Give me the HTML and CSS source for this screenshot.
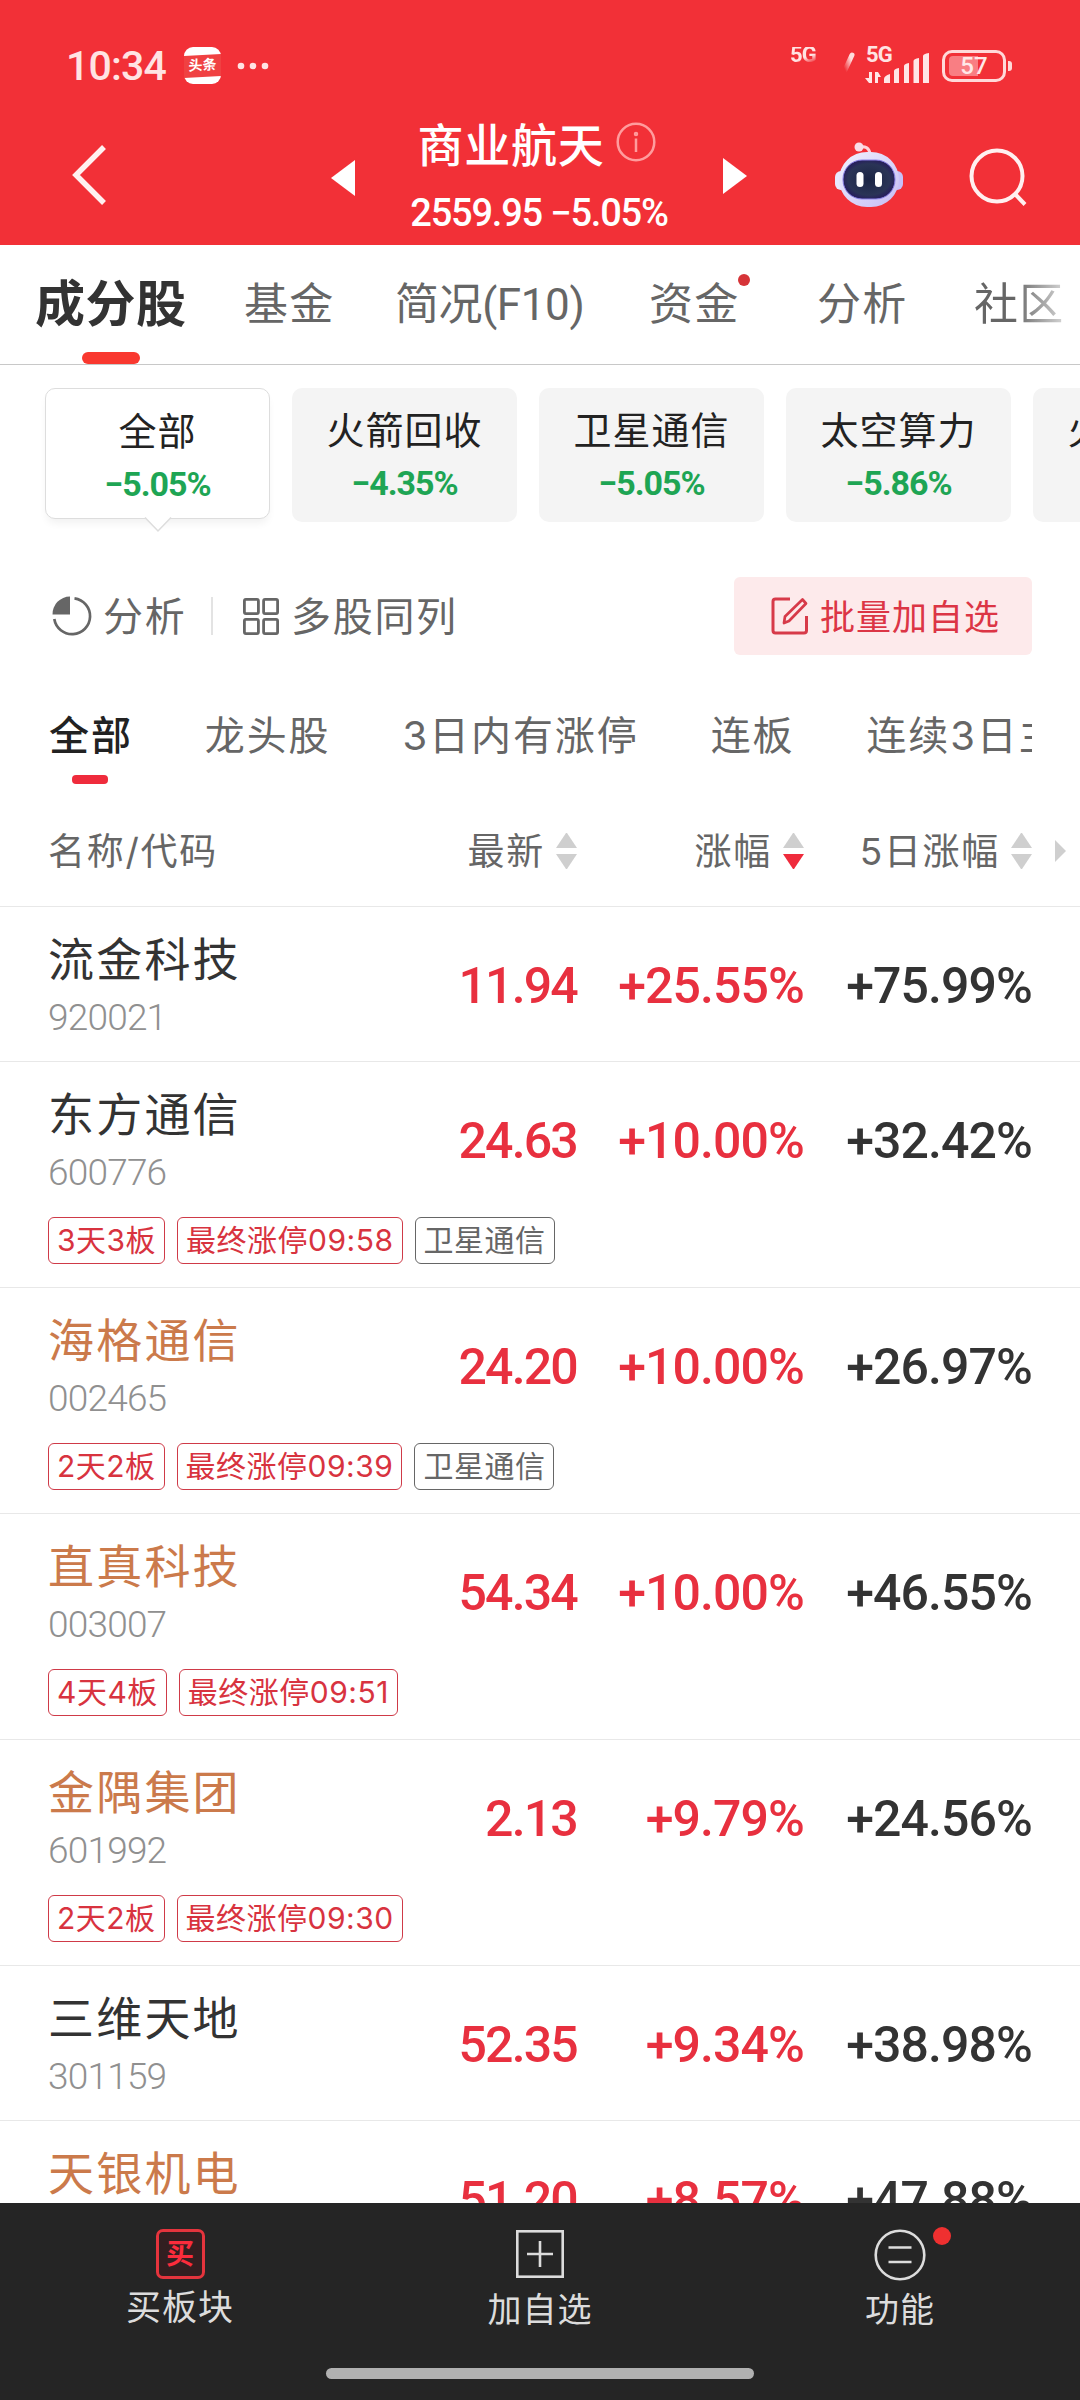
FILE: index.html
```html
<!DOCTYPE html>
<html lang="zh-CN">
<head>
    <meta charset="UTF-8">
    <meta name="viewport" content="width=device-width, initial-scale=1.0">
    <title>商业航天</title>
    <link rel="stylesheet" href="styles.css">
</head>
<body>
    <header class="header">
        <div class="status-bar">
            <span class="time">10:34</span>
            <span class="app-badge"><b>头条</b></span>
            <svg class="dots" width="32" height="8" viewBox="0 0 32 8" fill="#ffe3e3">
                <circle cx="4" cy="4" r="3.3"/><circle cx="16" cy="4" r="3.3"/><circle cx="28" cy="4" r="3.3"/>
            </svg>
            <div class="status-right">
                <div class="sim sim-1">
                    <span class="net net-faded">5G</span>
                    <svg width="14" height="22" viewBox="0 0 14 22">
                        <defs>
                            <linearGradient id="slash" x1="1" y1="0" x2="0" y2="1">
                                <stop offset="0.2" stop-color="#ffdcdc"/>
                                <stop offset="1" stop-color="#ffdcdc" stop-opacity="0"/>
                            </linearGradient>
                        </defs>
                        <path d="M11 3 L4 18" stroke="url(#slash)" stroke-width="5" stroke-linecap="round"/>
                    </svg>
                </div>
                <div class="sim sim-2">
                    <span class="net">5G</span>
                    <svg class="bars" width="64" height="31" viewBox="0 0 64 31" fill="#ffe6e6">
                        <path d="M3 20h3v11h-3l-4-5h4zM9 31v-11h3l3 5h-3v6z"/>
                        <path d="M18 31v-4q0-3 6-5v9z"/>
                        <path d="M28 31v-12q0-2 5-3v15z"/>
                        <path d="M38 31v-17q0-2 5-3v20z"/>
                        <path d="M47.5 31v-22q0-2 5.5-3v25z"/>
                        <path d="M57 31v-27q0-2 6-3v30z"/>
                    </svg>
                </div>
                <span class="battery"><i></i><em>57</em></span>
            </div>
        </div>
        <div class="nav-bar">
            <svg class="back" width="36" height="60" viewBox="0 0 36 60" fill="none" stroke="#fff1f0" stroke-width="5.5">
                <path d="M33 2 L5 30 L33 58"/>
            </svg>
            <svg class="prev" width="24" height="36" viewBox="0 0 24 36" fill="#fff"><path d="M24 0v36L0 18z"/></svg>
            <div class="title">
                <div class="title-name">商业航天
                    <svg width="40" height="40" viewBox="0 0 40 40" fill="none" stroke="#ff9c9d" stroke-width="2.5">
                        <circle cx="20" cy="20" r="18.3"/>
                        <path d="M20 16.5V30"/>
                        <circle cx="20" cy="12" r="1"/>
                    </svg>
                </div>
                <div class="title-quote">2559.95 −5.05%</div>
            </div>
            <svg class="next" width="24" height="36" viewBox="0 0 24 36" fill="#fff"><path d="M0 0v36l24-18z"/></svg>
            <svg class="robot" width="70" height="66" viewBox="0 0 70 66">
                <defs>
                    <linearGradient id="shell" x1="0" y1="0" x2="1" y2="1">
                        <stop offset="0" stop-color="#f2f2ff"/>
                        <stop offset="1" stop-color="#c5bcf3"/>
                    </linearGradient>
                    <radialGradient id="visor">
                        <stop offset="0" stop-color="#1b2444"/>
                        <stop offset="0.8" stop-color="#2a3456"/>
                        <stop offset="1" stop-color="#27215c"/>
                    </radialGradient>
                </defs>
                <path d="M25 5q10-2 11 7" fill="none" stroke="#ffd3dc" stroke-width="3"/>
                <circle cx="25" cy="5" r="4.5" fill="#f9dce8"/>
                <rect x="1" y="29" width="12" height="19" rx="6" fill="#e8e8ff"/>
                <rect x="57" y="29" width="12" height="19" rx="6" fill="#c7c0f8"/>
                <rect x="5" y="10" width="60" height="55" rx="28" fill="url(#shell)"/>
                <rect x="9" y="18" width="52" height="39" rx="19" fill="url(#visor)" stroke="#8c83e8" stroke-width="1"/>
                <rect x="22.5" y="30" width="7" height="15" rx="3.5" fill="#fff"/>
                <rect x="41" y="30" width="7" height="15" rx="3.5" fill="#fff"/>
            </svg>
            <svg class="search" width="58" height="58" viewBox="0 0 58 58" fill="none" stroke="#fff0f0" stroke-width="4">
                <circle cx="28" cy="28" r="25.5"/>
                <path d="M46 46l10 10.5"/>
            </svg>
        </div>
    </header>

    <nav class="tabs">
        <span class="tab active">成分股</span>
        <span class="tab">基金</span>
        <span class="tab tab-f10">简况(F10)</span>
        <span class="tab has-dot">资金</span>
        <span class="tab">分析</span>
        <span class="tab">社区</span>
    </nav>

    <main>
        <div class="chips">
            <div class="chip selected">
                <span>全部</span><b>−5.05%</b>
                <svg class="caret" width="28" height="16" viewBox="0 0 28 16"><path d="M1 0.5 L14 14 L27 0.5" fill="#fff" stroke="#ddd" stroke-width="1.5"/></svg>
            </div>
            <div class="chip"><span>火箭回收</span><b>−4.35%</b></div>
            <div class="chip"><span>卫星通信</span><b>−5.05%</b></div>
            <div class="chip"><span>太空算力</span><b>−5.86%</b></div>
            <div class="chip"><span>火箭制造</span></div>
        </div>

        <div class="tools">
            <svg width="40" height="40" viewBox="0 0 40 40" fill="none" stroke="#666" stroke-width="2.7">
                <path d="M22.5 2.3A18 18 0 1 1 2.3 23"/>
                <path d="M18 0.5V18.5H0.5A17.5 17.5 0 0 1 18 0.5z" fill="#666" stroke="none"/>
            </svg>
            <span class="tool-analyse">分析</span>
            <i class="divider"></i>
            <svg width="36" height="37" viewBox="0 0 36 37" fill="none" stroke="#666" stroke-width="2.8">
                <rect x="1.4" y="1.4" width="14" height="14.2" rx="1.5"/>
                <rect x="20.6" y="1.4" width="14" height="14.2" rx="1.5"/>
                <rect x="1.4" y="21.4" width="14" height="14.2" rx="1.5"/>
                <rect x="20.6" y="21.4" width="14" height="14.2" rx="1.5"/>
            </svg>
            <span class="tool-multi">多股同列</span>
            <div class="batch-btn">
                <svg width="38" height="38" viewBox="0 0 38 38" fill="none" stroke="#d73a49" stroke-width="3" stroke-linejoin="round">
                    <path d="M19 2H4.5Q2 2 2 4.5V33.5Q2 36 4.500 36H33Q35.5 36 35.5 33.5V19"/>
                    <path d="M13 26l1-6.5L31.5 2.5L35 6.5L18 24z" stroke-width="2.7"/>
                </svg>
                <span>批量加自选</span>
            </div>
        </div>

        <div class="filters">
            <span class="active">全部</span>
            <span>龙头股</span>
            <span>3日内有涨停</span>
            <span>连板</span>
            <span>连续3日主力</span>
        </div>

        <div class="grid-row table-head">
            <span class="label-text">名称/代码</span>
            <span class="col"><span class="label-text">最新</span><i class="sort"></i></span>
            <span class="col"><span class="label-text">涨幅</span><i class="sort desc"></i></span>
            <span class="col"><span class="label-text">5日涨幅</span><i class="sort"></i></span>
            <i class="more"></i>
        </div>

        <div class="stock-list">
            <div class="stock">
                <div class="grid-row">
                    <div><div class="name">流金科技</div><div class="code">920021</div></div>
                    <b class="num price">11.94</b><b class="num up">+25.55%</b><b class="num">+75.99%</b>
                </div>
            </div>
            <div class="stock">
                <div class="grid-row">
                    <div><div class="name">东方通信</div><div class="code">600776</div></div>
                    <b class="num price">24.63</b><b class="num up">+10.00%</b><b class="num">+32.42%</b>
                </div>
                <div class="tags"><span>3天3板</span><span>最终涨停09:58</span><span class="grey">卫星通信</span></div>
            </div>
            <div class="stock">
                <div class="grid-row">
                    <div><div class="name own">海格通信</div><div class="code">002465</div></div>
                    <b class="num price">24.20</b><b class="num up">+10.00%</b><b class="num">+26.97%</b>
                </div>
                <div class="tags"><span>2天2板</span><span>最终涨停09:39</span><span class="grey">卫星通信</span></div>
            </div>
            <div class="stock">
                <div class="grid-row">
                    <div><div class="name own">直真科技</div><div class="code">003007</div></div>
                    <b class="num price">54.34</b><b class="num up">+10.00%</b><b class="num">+46.55%</b>
                </div>
                <div class="tags"><span>4天4板</span><span>最终涨停09:51</span></div>
            </div>
            <div class="stock">
                <div class="grid-row">
                    <div><div class="name own">金隅集团</div><div class="code">601992</div></div>
                    <b class="num price">2.13</b><b class="num up">+9.79%</b><b class="num">+24.56%</b>
                </div>
                <div class="tags"><span>2天2板</span><span>最终涨停09:30</span></div>
            </div>
            <div class="stock">
                <div class="grid-row">
                    <div><div class="name">三维天地</div><div class="code">301159</div></div>
                    <b class="num price">52.35</b><b class="num up">+9.34%</b><b class="num">+38.98%</b>
                </div>
            </div>
            <div class="stock">
                <div class="grid-row">
                    <div><div class="name own">天银机电</div></div>
                    <b class="num price">51.20</b><b class="num up">+8.57%</b><b class="num">+47.88%</b>
                </div>
            </div>
        </div>
    </main>

    <footer class="footer">
        <div class="actions">
            <div class="action">
                <span class="buy-icon">买</span>
                <span class="label">买板块</span>
            </div>
            <div class="action">
                <svg width="50" height="50" viewBox="0 0 50 50" fill="none" stroke="#dcdcdc" stroke-width="2.6">
                    <rect x="2.3" y="2.3" width="45.4" height="45.4"/>
                    <path d="M12 25h26M25 12v26"/>
                </svg>
                <span class="label low">加自选</span>
            </div>
            <div class="action">
                <svg width="52" height="52" viewBox="0 0 52 52" fill="none" stroke="#dcdcdc" stroke-width="2.6">
                    <circle cx="26" cy="26" r="24.3"/>
                    <path d="M14.5 18.5h23M14.5 33h23"/>
                </svg>
                <span class="label low last">功能</span>
                <i class="dot"></i>
            </div>
        </div>
        <div class="home-bar"></div>
    </footer>
</body>
</html>
```
FILE: styles.css
```css
* {
    box-sizing: border-box;
}
body {
    margin: 0;
    width: 1080px;
    height: 2400px;
    overflow: hidden;
    display: flex;
    flex-direction: column;
    background: #fff;
    color: #333;
    font-family: Roboto, "Noto Sans CJK SC", sans-serif;
}
svg {
    display: block;
    flex: none;
    overflow: visible;
}
i, em {
    font-style: normal;
}

/* header */
.header {
    height: 245px;
    flex: none;
    background: #f23037;
    color: #fff;
}
.status-bar {
    height: 110px;
    padding: 21px 67px 0 66px;
    display: flex;
    align-items: center;
}
.time {
    width: 118px;
    font-size: 41px;
    font-weight: 500;
    letter-spacing: -0.8px;
    color: #ffe3e3;
}
.app-badge {
    width: 37px;
    height: 37px;
    padding: 8px 0;
    border-radius: 9px;
    background: #fff;
}
.app-badge b {
    display: block;
    height: 22px;
    line-height: 21px;
    background: #f04142;
    font-size: 14px;
    text-align: center;
    transform: skewY(-3deg);
}
.dots {
    margin-left: 16px;
}
.status-right {
    margin-left: auto;
    display: flex;
    align-items: center;
}
.sim {
    height: 34px;
    display: flex;
}
.sim-1 {
    width: 76px;
    gap: 24px;
}
.sim-1 svg {
    margin-top: 3px;
}
.net {
    width: 27px;
    margin-top: -2px;
    font-size: 22px;
    line-height: 16px;
    font-weight: 700;
    letter-spacing: -0.8px;
    color: #ffe3e3;
}
.net-faded {
    height: 17px;
    -webkit-mask-image: linear-gradient(160deg, #000 60%, transparent 90%);
    mask-image: linear-gradient(160deg, #000 60%, transparent 90%);
}
.sim-2 {
    width: 76px;
}
.bars {
    margin: 3px 0 0 -27px;
}
.battery {
    position: relative;
    width: 64px;
    height: 32px;
    margin-right: 7px;
    border: 3px solid #ffd9d9;
    border-radius: 10px;
}
.battery i {
    display: block;
    width: 29px;
    height: 20px;
    margin: 3px 4px;
    border-radius: 4px 0 0 4px;
    background: #f97e83;
}
.battery em {
    position: absolute;
    inset: 0;
    line-height: 27px;
    font-size: 24px;
    font-weight: 500;
    text-align: center;
    color: #ffe8e8;
}
.battery::after {
    content: "";
    position: absolute;
    right: -9px;
    top: 8px;
    width: 4px;
    height: 10px;
    border-radius: 0 3px 3px 0;
    background: #ffd9d9;
}
.nav-bar {
    height: 130px;
    padding-left: 71px;
    display: flex;
    align-items: center;
}
.prev {
    margin: 5px 0 0 224px;
}
.title {
    width: 258px;
    margin: 0 55px;
    white-space: nowrap;
}
.title-name {
    display: flex;
    align-items: center;
    justify-content: center;
    gap: 12px;
    height: 56px;
    margin-top: -4px;
    padding-right: 4px;
    font-size: 46px;
    letter-spacing: 0.7px;
    font-weight: 500;
}
.title-quote {
    margin-top: 23px;
    line-height: 40px;
    font-size: 38px;
    font-weight: 500;
    letter-spacing: -1.2px;
    text-align: center;
}
.next {
    margin-top: 2px;
}
.robot {
    margin-left: 87px;
}
.search {
    margin: 3px 0 0 65px;
}

/* tabs */
.tabs {
    height: 120px;
    flex: none;
    padding-left: 35px;
    display: flex;
    overflow: hidden;
    border-bottom: 1px solid #c8c8c8;
    white-space: nowrap;
    line-height: 120px;
    font-size: 44px;
    letter-spacing: 1.2px;
    color: #666;
}
.tab {
    width: 88px;
    margin-right: 80px;
    position: relative;
}
.tab.active {
    width: 150px;
    margin-right: 59px;
    font-size: 50px;
    letter-spacing: 0.5px;
    font-weight: 700;
    color: #333;
}
.tab.active::after {
    content: "";
    position: absolute;
    left: 47px;
    bottom: 0;
    width: 58px;
    height: 12px;
    border-radius: 6px;
    background: #f9382f;
}
.tab:nth-child(2) {
    margin-right: 63px;
}
.tab-f10 {
    width: 188px;
    margin-right: 66px;
    letter-spacing: -0.4px;
}
.tab:nth-child(5) {
    margin-right: 69px;
}
.tab:last-child {
    margin-right: 0;
    -webkit-mask-image: linear-gradient(90deg, #000 45%, rgba(0, 0, 0, 0.3));
    mask-image: linear-gradient(90deg, #000 45%, rgba(0, 0, 0, 0.3));
}
.has-dot::after {
    content: "";
    position: absolute;
    left: 89px;
    top: 29px;
    width: 12px;
    height: 12px;
    border-radius: 50%;
    background: #d63438;
}

/* content */
main {
    height: 1838px;
    flex: none;
    overflow: hidden;
}
.chips {
    display: flex;
    gap: 22px;
    padding: 23px 0 0 45px;
}
.chip {
    position: relative;
    flex: none;
    width: 225px;
    height: 134px;
    padding-top: 17px;
    border-radius: 10px;
    background: #f4f4f4;
    text-align: center;
}
.chip span, .chip b {
    display: block;
}
.chip span {
    line-height: 52px;
    font-size: 38px;
    letter-spacing: 1px;
    color: #222;
}
.chip b {
    margin-top: 6px;
    line-height: 40px;
    font-size: 34px;
    font-weight: 700;
    letter-spacing: -1px;
    color: #1ea554;
}
.chip.selected {
    height: 131px;
    background: #fff;
    border: 1.5px solid #ddd;
    box-shadow: 0 6px 8px -2px rgba(0, 0, 0, 0.06);
}
.caret {
    position: absolute;
    left: 98px;
    bottom: -15px;
}
.tools {
    height: 78px;
    margin: 55px 48px 0 52px;
    display: flex;
    align-items: center;
    font-size: 40px;
    letter-spacing: 1.7px;
    color: #666;
}
.tool-analyse {
    width: 119px;
    padding: 0 0 4px 11px;
}
.divider {
    width: 2px;
    height: 38px;
    margin-right: 30px;
    background: #e3e3e3;
}
.tool-multi {
    padding: 0 0 4px 12px;
}
.batch-btn {
    margin-left: auto;
    width: 298px;
    height: 78px;
    padding-left: 37px;
    display: flex;
    align-items: center;
    gap: 11px;
    border-radius: 6px;
    background: #fdeaeb;
    color: #dc3545;
    font-size: 35px;
    letter-spacing: 1px;
}
.batch-btn span {
    padding-bottom: 4px;
}
.filters {
    height: 94px;
    margin: 47px 48px 0 49px;
    display: flex;
    overflow: hidden;
    white-space: nowrap;
    line-height: 68px;
    font-family: Inter, "Noto Sans CJK SC", sans-serif;
    font-size: 40px;
    letter-spacing: 1.9px;
    color: #666;
}
.filters span {
    flex: none;
    margin-right: 72px;
}
.filters .active {
    position: relative;
    color: #222;
    font-weight: 500;
}
.filters .active::after {
    content: "";
    position: absolute;
    left: 23px;
    top: 73px;
    width: 36px;
    height: 9px;
    border-radius: 4px;
    background: #ef2b3c;
}
.grid-row {
    position: relative;
    display: grid;
    grid-template-columns: 1fr 170px 227px 228px;
    padding: 0 48px;
}
.table-head {
    height: 111px;
    align-items: center;
    border-bottom: 1px solid #e8e8e8;
    font-family: Inter, "Noto Sans CJK SC", sans-serif;
    font-size: 37px;
    letter-spacing: 1.7px;
    color: #666;
}
.label-text {
    padding-bottom: 4px;
}
.col {
    display: flex;
    align-items: center;
    justify-content: flex-end;
}
.sort {
    width: 21px;
    margin-left: 11px;
}
.sort::before, .sort::after {
    content: "";
    display: block;
    border: 10.5px solid transparent;
}
.sort::before {
    border-top: 0;
    border-bottom: 15px solid #cfcfcf;
    margin-bottom: 6px;
}
.sort::after {
    border-bottom: 0;
    border-top: 15px solid #cfcfcf;
}
.sort.desc::after {
    border-top-color: #ef2b3c;
}
.more {
    position: absolute;
    right: 14px;
    top: 44px;
    border: 11px solid transparent;
    border-left-color: #cfcfcf;
    border-right: 0;
}

/* stock list */
.stock {
    border-bottom: 1px solid #e8e8e8;
}
.stock .grid-row {
    height: 154px;
}
.name {
    margin-top: 21px;
    line-height: 64px;
    font-size: 46px;
    letter-spacing: 2.2px;
}
.name.own {
    color: #cb7a4b;
}
.code {
    margin-top: 1px;
    line-height: 50px;
    font-size: 37px;
    font-weight: 300;
    letter-spacing: -0.8px;
    color: #909090;
}
.num {
    line-height: 158px;
    font-size: 50px;
    font-weight: 500;
    letter-spacing: -0.9px;
    text-align: right;
}
.num.up, .num.price {
    color: #e8303f;
}
.num.price {
    letter-spacing: -1.8px;
}
.tags {
    height: 71px;
    padding: 1px 48px 0;
    display: flex;
    gap: 12px;
    font-family: Inter, "Noto Sans CJK SC", sans-serif;
}
.tags span {
    height: 47px;
    padding: 0 8px;
    border: 1.5px solid #cf3a48;
    border-radius: 6px;
    line-height: 45px;
    font-size: 30px;
    letter-spacing: 0.5px;
    color: #d8333f;
}
.tags .grey {
    border-color: #666;
    color: #666;
}

/* bottom bar */
.footer {
    flex: 1;
    background: #252525;
    color: #dcdcdc;
}
.actions {
    height: 165px;
    display: flex;
}
.action {
    position: relative;
    flex: 1;
    padding-top: 26px;
    display: flex;
    flex-direction: column;
    align-items: center;
}
.buy-icon {
    width: 49px;
    height: 50px;
    border: 3px solid #e5343d;
    border-radius: 7px;
    background: #321f21;
    color: #fa2c3c;
    font-size: 28px;
    font-weight: 700;
    line-height: 45px;
    text-align: center;
}
.label {
    margin-top: 5px;
    line-height: 50px;
    font-size: 35px;
    letter-spacing: 1px;
}
.label.low {
    margin-top: 6px;
    font-size: 34px;
}
.label.last {
    margin-top: 4px;
}
.dot {
    position: absolute;
    left: 213px;
    top: 24px;
    width: 18px;
    height: 18px;
    border-radius: 50%;
    background: #ef3030;
}
.home-bar {
    width: 428px;
    height: 11px;
    margin: 0 auto;
    border-radius: 6px;
    background: #b1b1b1;
}
```
